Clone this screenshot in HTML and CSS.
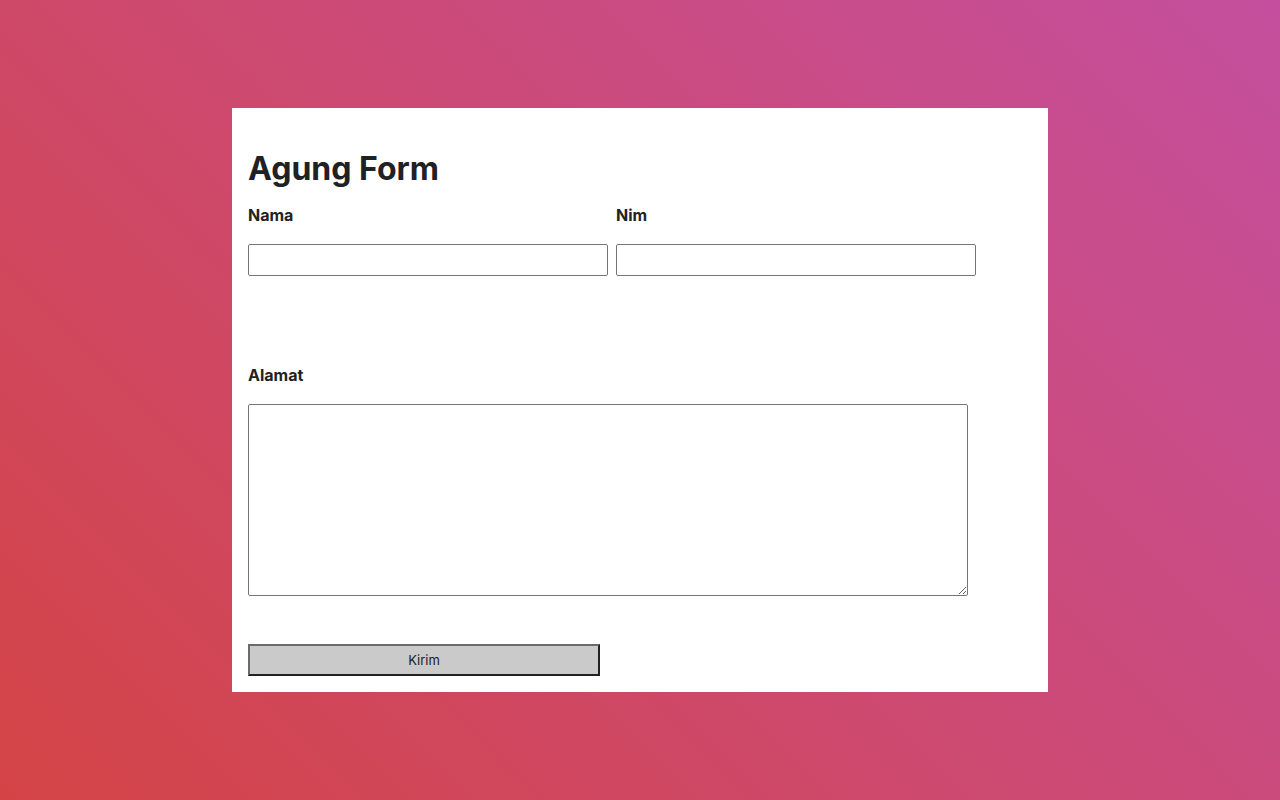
FILE: index.html
```html
<!DOCTYPE html>
<html lang="id">
<head>
<meta charset="utf-8">
<title>Agung Form</title>
<link rel="stylesheet" href="styles.css">
</head>
<body>
<main class="page">
  <form class="card">
    <h1 class="title">Agung Form</h1>
    <div class="row">
      <div class="field">
        <label class="label" for="nama">Nama</label>
        <input class="input" id="nama" type="text">
      </div>
      <div class="field">
        <label class="label" for="nim">Nim</label>
        <input class="input" id="nim" type="text">
      </div>
    </div>
    <div class="field field-address">
      <label class="label" for="alamat">Alamat</label>
      <textarea class="textarea" id="alamat"></textarea>
    </div>
    <button class="submit" type="button">Kirim</button>
  </form>
</main>
</body>
</html>
```

FILE: styles.css
```css
* {
  box-sizing: border-box;
}

html, body {
  margin: 0;
  padding: 0;
}

body {
  font-family: Inter, "Noto Sans", sans-serif;
  color: #222;
  background: linear-gradient(45deg, #d44446, #c54f9e);
  min-height: 100vh;
}

.page {
  min-height: 100vh;
  display: flex;
  align-items: center;
  justify-content: center;
}

.card {
  width: 816px;
  background: #fff;
  padding: 16px;
  display: flex;
  flex-direction: column;
  align-items: flex-start;
}

.title {
  margin: 25px 0 14px;
  font-size: 32px;
  line-height: 40px;
  font-weight: 700;
  color: #202124;
}

.row {
  display: flex;
  gap: 8px;
}

.field {
  display: flex;
  flex-direction: column;
}

.field-address {
  margin-top: 87px;
}

.label {
  font-size: 16px;
  line-height: 24px;
  font-weight: 700;
  color: #222;
  margin-bottom: 17px;
}

.input {
  width: 360px;
  height: 32px;
  border: 1px solid #767676;
  border-radius: 2px;
  background: #fff;
  font-family: inherit;
  font-size: 14px;
  padding: 0 6px;
  margin: 0;
}

.textarea {
  width: 720px;
  height: 192px;
  border: 1px solid #767676;
  border-radius: 2px;
  background: #fff;
  font-family: inherit;
  font-size: 14px;
  padding: 4px 6px;
  margin: 0;
}

.submit {
  margin-top: 48px;
  width: 352px;
  height: 32px;
  background: #cacaca;
  border-style: solid;
  border-width: 2px;
  border-color: #6b6b6b #222 #222 #6b6b6b;
  font-family: Inter, "Noto Sans", sans-serif;
  font-size: 13px;
  color: #1c1c28;
  padding: 0;
}
```
